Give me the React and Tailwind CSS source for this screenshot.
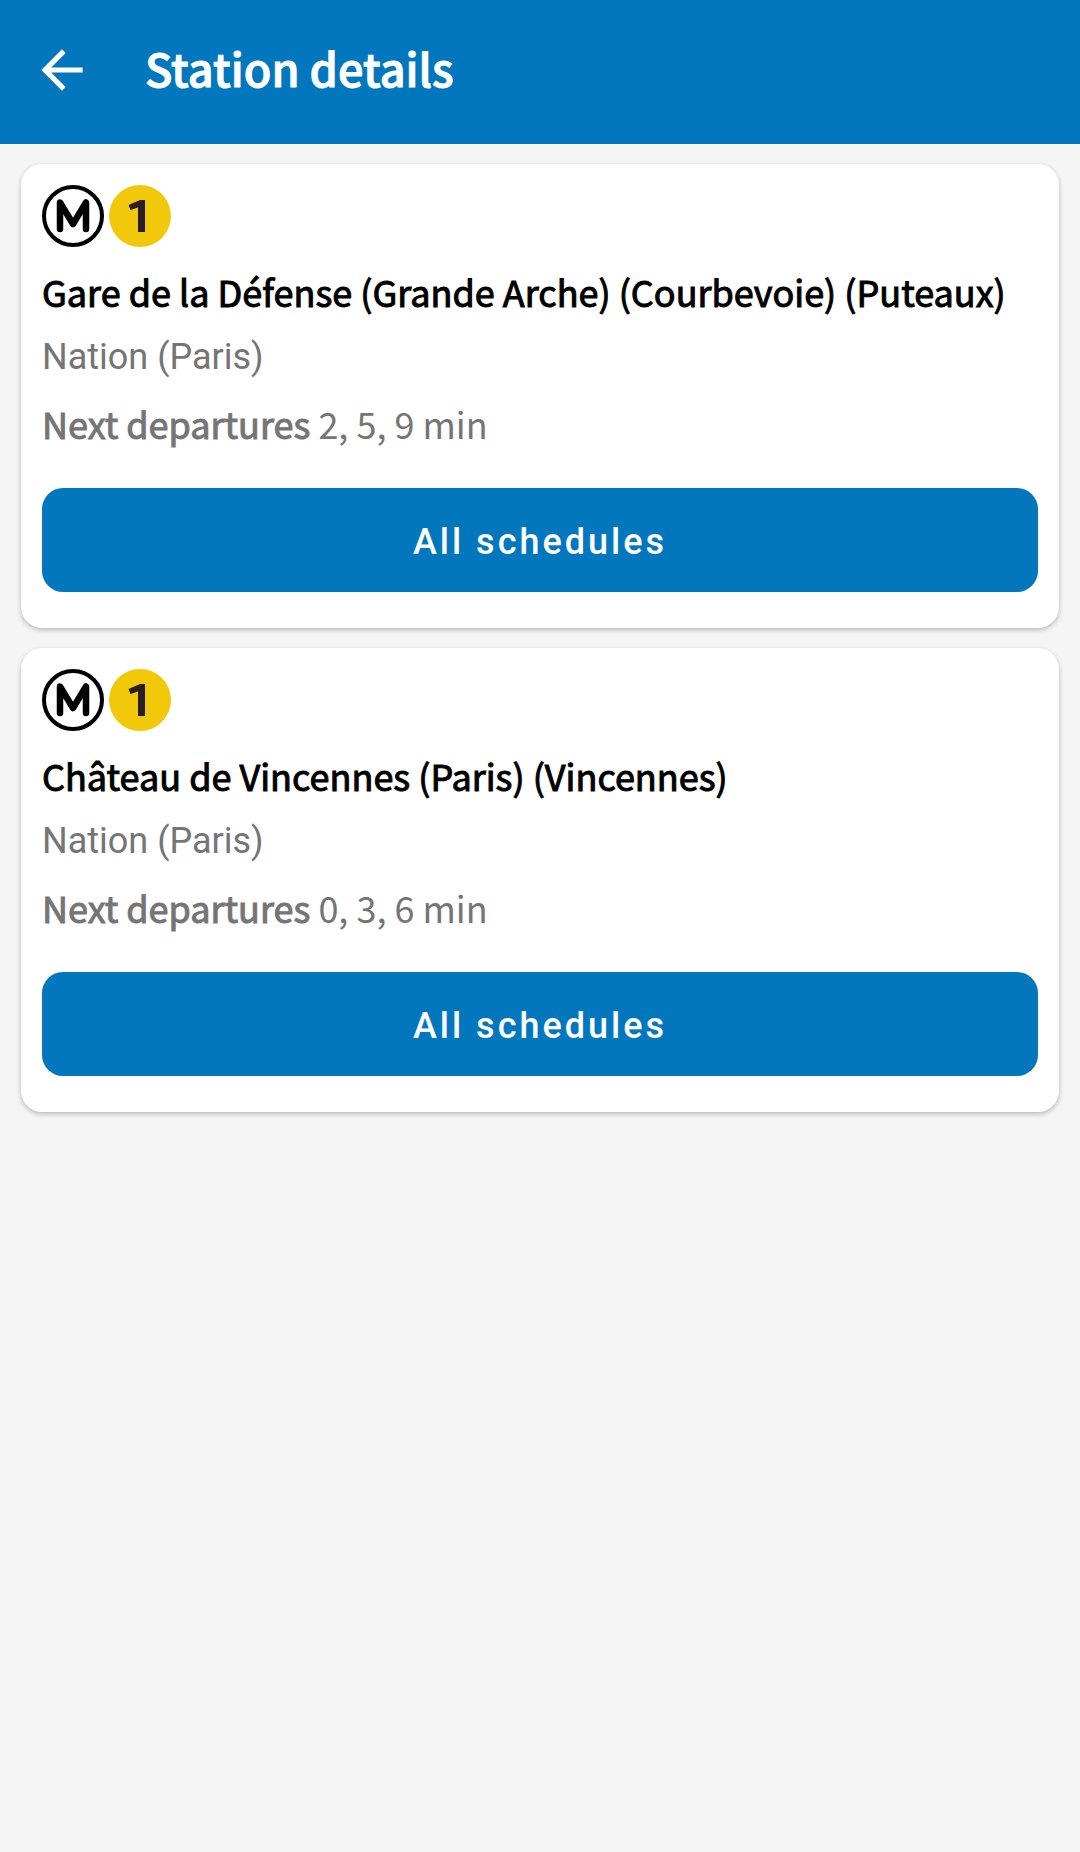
const lines = [
  {
    direction: 'Gare de la Défense (Grande Arche) (Courbevoie) (Puteaux)',
    station: 'Nation (Paris)',
    departures: '2, 5, 9 min',
  },
  {
    direction: 'Château de Vincennes (Paris) (Vincennes)',
    station: 'Nation (Paris)',
    departures: '0, 3, 6 min',
  },
];

function BackArrow() {
  return (
    <svg viewBox="0 0 24 24" className="size-[62px]" fill="currentColor" aria-hidden="true">
      <path d="M20 11H7.83l5.59-5.59L12 4l-8 8 8 8 1.41-1.41L7.83 13H20v-2z" />
    </svg>
  );
}

function MetroLogo() {
  return (
    <svg viewBox="0 0 62 62" className="size-[62px]" fill="none" stroke="#000" role="img" aria-label="Metro">
      <circle cx="31" cy="31" r="29" strokeWidth="4" />
      <path d="M18 44V17.5L31 39L44 17.5V44" strokeWidth="6.5" strokeLinecap="round" strokeLinejoin="round" />
    </svg>
  );
}

function LineOneLogo() {
  return (
    <svg viewBox="0 0 62 62" className="size-[62px]" role="img" aria-label="Line 1">
      <circle cx="31" cy="31" r="31" fill="#f2c90a" />
      <path d="M31 15H36V47H29V22.5L21.5 25L19.5 20Z" fill="#2b1d26" />
    </svg>
  );
}

function StationCard({ direction, station, departures }) {
  return (
    <article className="rounded-[21px] bg-white px-[21px] pt-[21px] pb-9 shadow-[0_2px_5px_rgba(0,0,0,0.25)]">
      <div className="flex gap-[5px]">
        <MetroLogo />
        <LineOneLogo />
      </div>
      <h2 className="mt-[14px] text-[36px] leading-[60px] font-normal text-black [-webkit-text-stroke:1px]">{direction}</h2>
      <p className="mt-[6px] font-[Roboto,sans-serif] text-[36px] leading-[60px] text-[#757575]">{station}</p>
      <p className="mt-[6px] text-[36px] leading-[60px] font-normal text-[#757575]">
        <strong className="font-normal [-webkit-text-stroke:1px]">Next departures</strong> {departures}
      </p>
      <button
        type="button"
        className="mt-[35px] h-[104px] w-full rounded-[21px] bg-[#0277bd] pt-1 font-[Roboto,sans-serif] text-[36px] font-medium tracking-[3px] text-white"
      >
        All schedules
      </button>
    </article>
  );
}

export default function App() {
  return (
    <div className="min-h-screen bg-[#f5f5f5] font-['Noto_Sans_CJK_SC','Noto_Sans',sans-serif]">
      <header className="flex h-36 items-center gap-[52px] bg-[#0277bd] px-[31px] pb-1 text-white">
        <button type="button" aria-label="Back">
          <BackArrow />
        </button>
        <h1 className="pb-1 text-[45px] leading-[60px] font-medium [-webkit-text-stroke:1px]">Station details</h1>
      </header>
      <main className="flex flex-col gap-5 px-[21px] py-5">
        {lines.map((line) => (
          <StationCard key={line.direction} {...line} />
        ))}
      </main>
    </div>
  );
}
